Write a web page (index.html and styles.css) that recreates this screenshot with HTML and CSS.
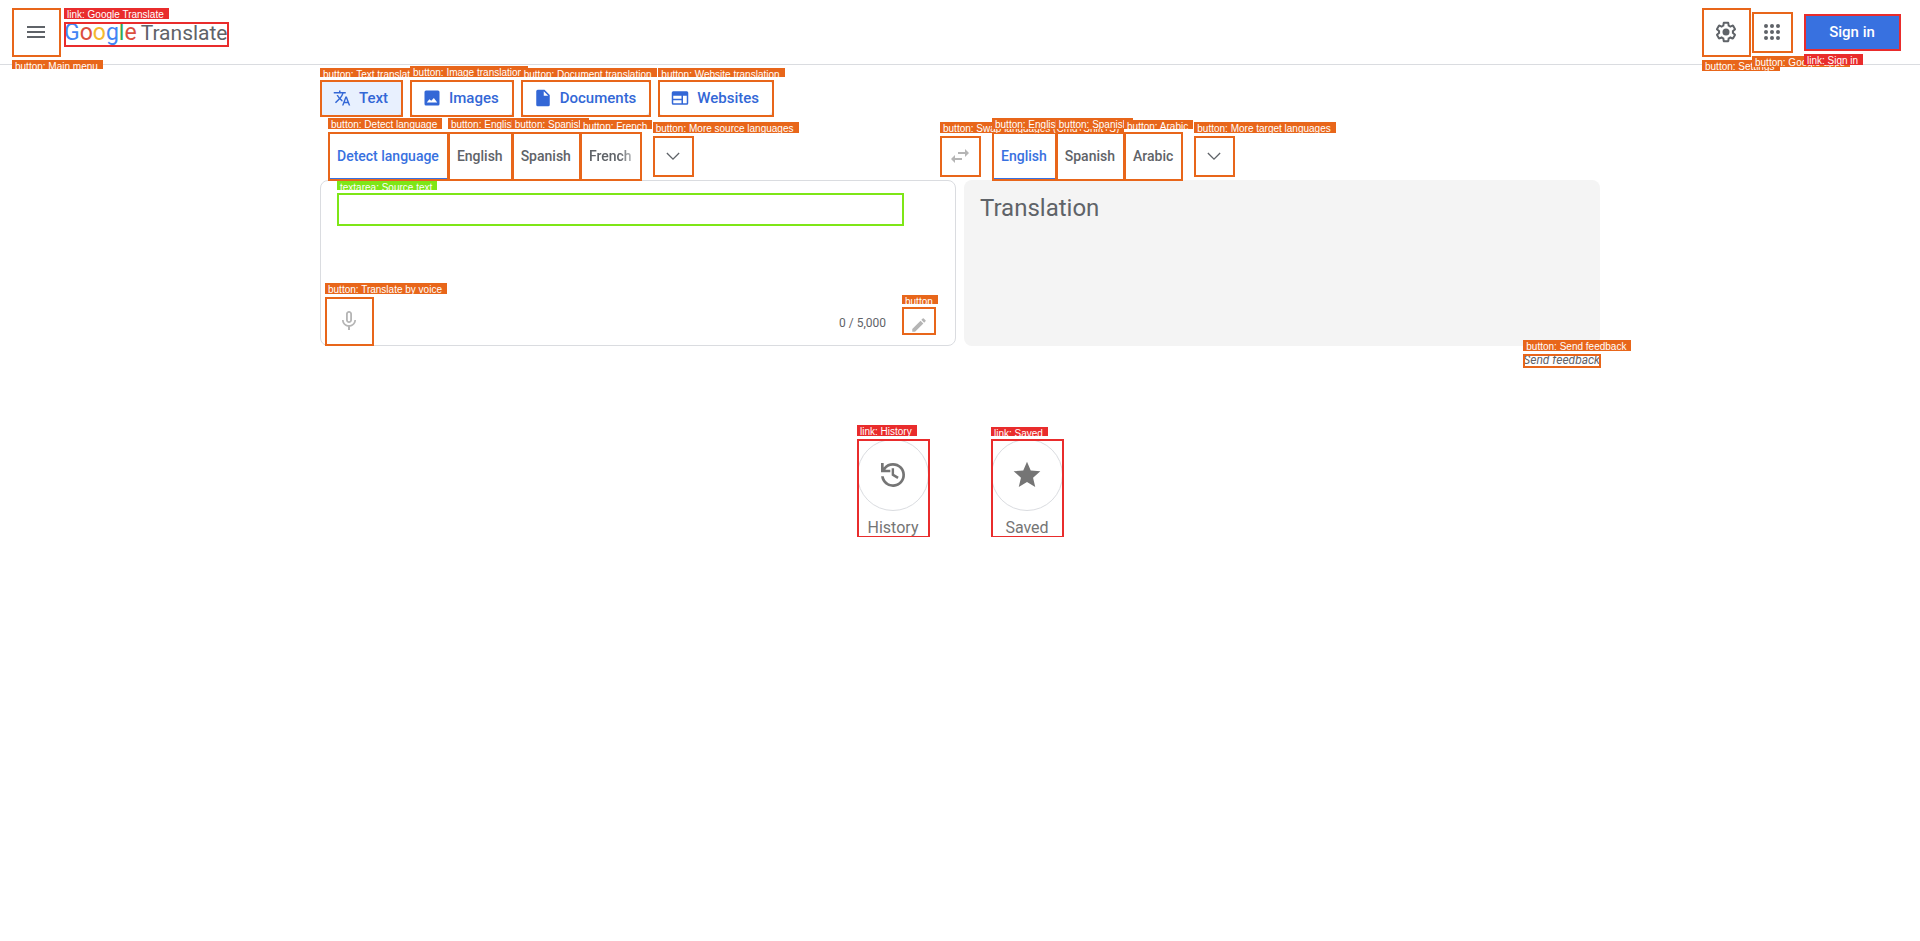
FILE: index.html
```
<!DOCTYPE html>
<html lang="en">
<head>
<meta charset="utf-8">
<meta name="viewport" content="width=device-width, initial-scale=1">
<title>Google Translate</title>
<link rel="stylesheet" href="styles.css">
</head>
<body>
<header class="header">
  <div class="mark"><button class="icon-button large" aria-label="Main menu"><svg viewBox="0 0 24 24"><path d="M3 18h18v-2H3v2zm0-5h18v-2H3v2zm0-7v2h18V6H3z"/></svg></button><span class="tag below cut">button: Main menu</span></div>
  <div class="mark red brand-mark"><a class="brand" href="#"><span class="word"><span class="blue">G</span><span class="coral">o</span><span class="yellow">o</span><span class="blue">g</span><span class="green">l</span><span class="coral">e</span></span> <span>Translate</span></a><span class="tag">link: Google Translate</span></div>
  <div class="account">
    <div class="mark"><button class="icon-button large" aria-label="Settings"><svg viewBox="0 0 24 24"><path d="M13.85 22.25h-3.7c-.74 0-1.36-.54-1.45-1.27l-.27-1.89c-.27-.14-.53-.29-.79-.46l-1.8.72c-.7.26-1.47-.03-1.81-.65L2.2 15.53c-.35-.66-.2-1.44.36-1.88l1.53-1.19c-.01-.15-.02-.3-.02-.46 0-.15.01-.31.02-.46l-1.52-1.19c-.59-.45-.74-1.26-.37-1.88l1.85-3.19c.34-.62 1.11-.9 1.79-.63l1.81.73c.26-.17.52-.32.78-.46l.27-1.91c.09-.7.71-1.25 1.44-1.25h3.7c.74 0 1.36.54 1.45 1.27l.27 1.89c.27.14.53.29.79.46l1.8-.72c.71-.26 1.48.03 1.82.65l1.84 3.18c.36.66.2 1.44-.36 1.88l-1.52 1.19c.01.15.02.3.02.46s-.01.31-.02.46l1.52 1.19c.56.45.72 1.23.37 1.86l-1.86 3.22c-.34.62-1.11.9-1.8.63l-1.8-.72c-.26.17-.52.32-.78.46l-.27 1.91c-.1.68-.72 1.22-1.46 1.22zm-3.23-2h2.76l.37-2.55.53-.22c.44-.18.88-.44 1.34-.78l.45-.34 2.38.96 1.38-2.4-2.03-1.58.07-.56c.03-.26.06-.51.06-.78s-.03-.53-.06-.78l-.07-.56 2.03-1.58-1.39-2.4-2.39.96-.45-.35c-.42-.32-.87-.58-1.33-.77l-.52-.22-.37-2.55h-2.76l-.37 2.55-.53.21c-.44.19-.88.44-1.34.79l-.45.33-2.38-.95-1.39 2.39 2.03 1.58-.07.56a7 7 0 0 0-.06.79c0 .26.02.53.06.78l.07.56-2.03 1.58 1.38 2.4 2.39-.96.45.35c.43.33.86.58 1.33.77l.53.22.38 2.55z"/><circle cx="12" cy="12" r="3.5"/></svg></button><span class="tag below">button: Settings</span></div>
    <div class="mark"><button class="icon-button" aria-label="Google apps"><svg viewBox="0 0 24 24"><circle cx="6" cy="6" r="2"/><circle cx="12" cy="6" r="2"/><circle cx="18" cy="6" r="2"/><circle cx="6" cy="12" r="2"/><circle cx="12" cy="12" r="2"/><circle cx="18" cy="12" r="2"/><circle cx="6" cy="18" r="2"/><circle cx="12" cy="18" r="2"/><circle cx="18" cy="18" r="2"/></svg></button><span class="tag below">button: Google apps</span></div>
    <div class="mark red sign-mark"><a class="sign-in" href="#">Sign in</a><span class="tag below">link: Sign in</span></div>
  </div>
</header>
<main class="page">
  <nav class="modes" aria-label="Translation types">
    <div class="mark"><button class="mode active"><svg viewBox="0 0 24 24"><path d="M12.870 15.070l-2.540-2.510.03-.03A17.520 17.520 0 0 0 14.070 6H17V4h-7V2H8v2H1v2h11.170C11.500 7.920 10.440 9.750 9 11.350 8.070 10.320 7.300 9.190 6.690 8h-2c.73 1.630 1.730 3.170 2.980 4.560l-5.090 5.020L4 19l5-5 3.110 3.110.76-2.040zM18.500 10h-2L12 22h2l1.120-3h4.750L21 22h2l-4.500-12zm-2.620 7l1.620-4.330L19.120 17h-3.240z"/></svg>Text</button><span class="tag cut">button: Text translation</span></div>
    <div class="mark"><button class="mode"><svg viewBox="0 0 24 24"><path fill-rule="evenodd" d="M20 2H4a2 2 0 0 0-2 2v16a2 2 0 0 0 2 2h16a2 2 0 0 0 2-2V4a2 2 0 0 0-2-2zM5 18l3.500-4.500 2.500 2.200L14.500 12l4.500 6z"/></svg>Images</button><span class="tag">button: Image translation</span></div>
    <div class="mark"><button class="mode"><svg viewBox="0 0 24 24"><path d="M14 1H5a2 2 0 0 0-2 2v18a2 2 0 0 0 2 2h14a2 2 0 0 0 2-2V8l-7-7zm-1 8V3l6 6h-6z"/></svg>Documents</button><span class="tag cut">button: Document translation</span></div>
    <div class="mark"><button class="mode"><svg viewBox="0 0 24 24"><path fill-rule="evenodd" d="M21 3H3a2 2 0 0 0-2 2v14a2 2 0 0 0 2 2h18a2 2 0 0 0 2-2V5a2 2 0 0 0-2-2zM3 9h11v4H3zm0 6h11v4H3zm13-6h5v10h-5z"/></svg>Websites</button><span class="tag cut">button: Website translation</span></div>
  </nav>
  <div class="languages">
    <div class="side source">
      <div class="mark"><button class="language active">Detect language</button><span class="tag">button: Detect language</span></div>
      <div class="mark"><button class="language">English</button><span class="tag">button: English</span></div>
      <div class="mark"><button class="language">Spanish</button><span class="tag">button: Spanish</span></div>
      <div class="mark"><button class="language fading">French</button><span class="tag cut">button: French</span></div>
      <div class="mark more"><button class="icon-button" aria-label="More source languages"><svg viewBox="0 0 24 24"><path d="M5.200 7.900 12 14.700l6.800-6.800 1.100 1.100-7.900 7.900L4.100 9z"/></svg></button><span class="tag">button: More source languages</span></div>
      <div class="mark swap"><button class="icon-button faint" aria-label="Swap languages (Cmd+Shift+S)"><svg viewBox="0 0 24 24"><path d="M6.990 11 3 15l3.990 4v-3H14v-2H6.990v-3zM21 9l-3.990-4v3H10v2h7.010v3L21 9z"/></svg></button><span class="tag">button: Swap languages (Cmd+Shift+S)</span></div>
    </div>
    <div class="side target">
      <div class="mark"><button class="language active">English</button><span class="tag">button: English</span></div>
      <div class="mark"><button class="language">Spanish</button><span class="tag">button: Spanish</span></div>
      <div class="mark"><button class="language">Arabic</button><span class="tag cut">button: Arabic</span></div>
      <div class="mark more"><button class="icon-button" aria-label="More target languages"><svg viewBox="0 0 24 24"><path d="M5.200 7.900 12 14.700l6.800-6.800 1.100 1.100-7.900 7.900L4.100 9z"/></svg></button><span class="tag">button: More target languages</span></div>
    </div>
  </div>
  <div class="panels">
    <section class="panel source-panel">
      <div class="mark lime"><textarea class="source-text" rows="1" aria-label="Source text"></textarea><span class="tag cut">textarea: Source text</span></div>
      <div class="panel-tools">
        <div class="mark"><button class="icon-button large faint" aria-label="Translate by voice"><svg viewBox="0 0 24 24"><path fill-rule="evenodd" d="M12 14c1.660 0 3-1.340 3-3V5c0-1.660-1.340-3-3-3S9 3.340 9 5v6c0 1.660 1.340 3 3 3zm-1.200-9.100a1.200 1.200 0 0 1 2.400 0l-.01 6.200a1.190 1.190 0 0 1-2.390 0zM17.300 11c0 3-2.540 5.100-5.300 5.100S6.700 14 6.700 11H5c0 3.410 2.720 6.230 6 6.720V21h2v-3.280c3.280-.48 6-3.300 6-6.720z"/></svg></button><span class="tag">button: Translate by voice</span></div>
        <span class="counter">0 / 5,000</span>
        <div class="mark edit-mark"><button class="edit" aria-label="Input tools"><svg viewBox="0 0 24 24"><path d="M3 17.250V21h3.750L17.810 9.940l-3.750-3.750zM20.710 7.040a1 1 0 0 0 0-1.410l-2.340-2.340a1 1 0 0 0-1.410 0l-1.830 1.830 3.750 3.750z"/></svg></button><span class="tag cut">button</span></div>
      </div>
    </section>
    <section class="panel target-panel">Translation</section>
  </div>
  <div class="feedback-row">
    <div class="mark"><button class="feedback">Send feedback</button><span class="tag">button: Send feedback</span></div>
  </div>
  <nav class="shortcuts" aria-label="Shortcuts">
    <div class="mark red"><a class="shortcut" href="#"><span class="disc"><svg viewBox="0 0 24 24"><path d="M12 3a9 9 0 0 0-7 3.350V3H3v7h7V8H6.260A7 7 0 1 1 5.070 13H3.050A9 9 0 1 0 12 3zm-1 4v5.400l4.300 2.600 1-1.700-3.500-2.050V7z"/></svg></span>History</a><span class="tag">link: History</span></div>
    <div class="mark red"><a class="shortcut" href="#"><span class="disc"><svg viewBox="0 0 24 24"><path d="M12 17.270 18.180 21l-1.640-7.030L22 9.240l-7.190-.61L12 2 9.190 8.630 2 9.240l5.460 4.730L5.820 21z"/></svg></span>Saved</a><span class="tag cut">link: Saved</span></div>
  </nav>
</main>
</body>
</html>
```
FILE: styles.css
```
* { box-sizing: border-box; }
body { margin: 0; background: #fff; color: #5f6368; font-family: Roboto, "Liberation Sans", sans-serif; font-size: 14px; }
button { margin: 0; padding: 0; border: 0; background: none; color: inherit; font: inherit; }
a { color: inherit; text-decoration: none; }
svg { display: block; width: 24px; height: 24px; fill: currentColor; flex: none; }

/* Outlined control with its role label */
.mark { position: relative; display: flex; flex: none; --tone: #e8661a; }
.mark::after { content: ""; position: absolute; inset: 0 -1px -1px 0; border: 2px solid var(--tone); pointer-events: none; }
.red { --tone: #e92c2c; }
.lime { --tone: #7ee617; }
.tag { position: absolute; left: 0; bottom: calc(100% + 3px); height: 11px; padding: 0 5px 0 3px; overflow: hidden; background: var(--tone); color: #fff; font-family: "Liberation Sans", sans-serif; font-size: 10px; line-height: 13px; white-space: nowrap; z-index: 1; }
.tag.cut { height: 9px; }
.tag.below { top: calc(100% + 4px); bottom: auto; }

.header { display: flex; align-items: center; height: 64px; padding: 0 20px 0 12px; box-shadow: 0 1px #dadce0; }
.brand-mark { margin-left: 4px; margin-top: 4px; }
.brand { display: flex; align-items: baseline; gap: 4px; width: 164px; height: 24px; font-size: 21px; line-height: 22px; }
.word { font-size: 23px; }
.blue { color: #4285f4; }
.coral { color: #db4f40; }
.yellow { color: #f4b92e; }
.green { color: #34a853; }
.account { display: flex; align-items: center; margin-left: auto; gap: 2px; }
.icon-button { display: flex; align-items: center; justify-content: center; width: 40px; height: 40px; }
.large { width: 48px; height: 48px; }
.faint { color: #b5b5b5; }
.sign-mark { margin-left: 10px; }
.sign-in { width: 96px; height: 36px; background: #3871e0; color: #fff; font-weight: 500; font-size: 15px; line-height: 36px; text-align: center; }

.page { max-width: 1280px; margin: 0 auto; padding-top: 16px; }
.modes { display: flex; gap: 8px; }
.mode { display: flex; align-items: center; gap: 8px; height: 36px; padding: 0 13px 0 12px; border: 1px solid #dadce0; border-radius: 4px; color: #3367d6; font-weight: 500; font-size: 15px; }
.mode svg { width: 18px; height: 18px; }
.mode.active { background: #e8f0fe; }
.languages { display: grid; grid-template-columns: 1fr 1fr; gap: 8px; margin-top: 16px; }
.side { display: flex; height: 48px; }
.source { padding-left: 8px; }
.target { padding-left: 28px; }
.language { height: 48px; padding: 0 9px; font-weight: 500; font-size: 14px; }
.language.active { color: #3871e0; box-shadow: inset 0 -2px #3871e0; }
.fading { -webkit-mask-image: linear-gradient(90deg, #000 65%, transparent); mask-image: linear-gradient(90deg, #000 65%, transparent); }
.more { align-self: center; margin-left: 12px; }
.more svg { width: 20px; height: 20px; }
.swap { align-self: center; margin-left: auto; margin-right: -24px; }

.panels { display: grid; grid-template-columns: 1fr 1fr; gap: 8px; }
.panel { min-height: 166px; border-radius: 8px; }
.source-panel { display: flex; flex-direction: column; justify-content: space-between; border: 1px solid #dadce0; }
.source-panel .lime { margin: 12px 52px 0 16px; }
.source-text { flex: 1; height: 32px; padding: 0; border: 0; resize: none; outline: 0; overflow: hidden; font: 24px/32px Roboto, sans-serif; }
.panel-tools { display: flex; align-items: center; padding: 0 20px 0 4px; }
.counter { margin-left: auto; margin-right: 16px; padding-top: 4px; font-size: 12px; }
.edit-mark { margin-bottom: 2px; }
.edit { display: flex; align-items: flex-end; justify-content: center; width: 33px; height: 27px; color: #b5b5b5; overflow: hidden; }
.edit svg { width: 18px; height: 18px; }
.target-panel { padding: 12px 16px; background: #f4f4f4; font-size: 24px; line-height: 32px; }
.feedback-row { display: flex; justify-content: flex-end; margin-top: 8px; }
.feedback { height: 13px; font-size: 12px; line-height: 13px; font-style: italic; }
.shortcuts { display: flex; justify-content: center; gap: 62px; margin-top: 72px; }
.shortcut { display: flex; flex-direction: column; align-items: center; gap: 8px; color: #757575; font-size: 16px; line-height: 18px; }
.disc { display: flex; flex: none; align-items: center; justify-content: center; width: 72px; height: 72px; border: 1px solid #dadce0; border-radius: 50%; }
.disc svg { width: 32px; height: 32px; }
```
